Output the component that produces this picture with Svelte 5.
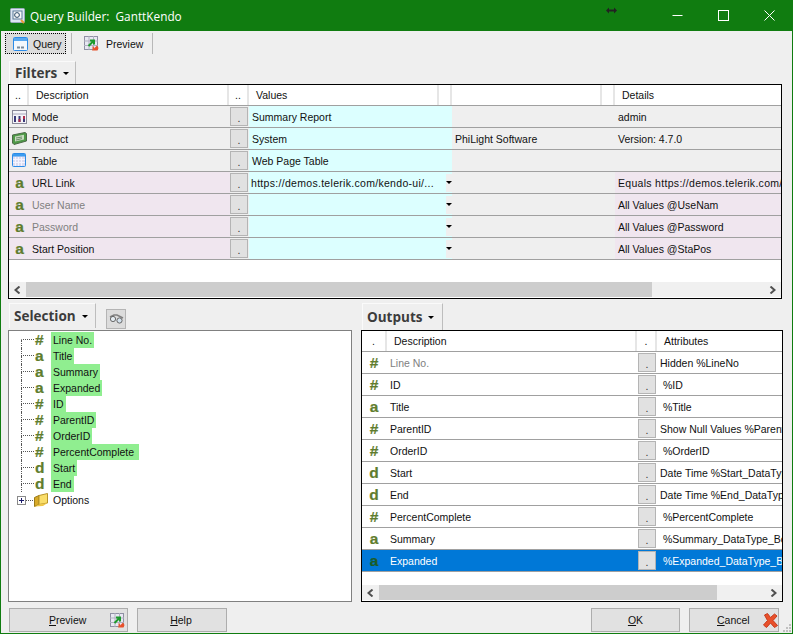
<script>
	const filters = [
		{ icon: "mode", name: "Mode", value: "Summary Report", extra: "", details: "admin" },
		{ icon: "product", name: "Product", value: "System", extra: "PhiLight Software", details: "Version: 4.7.0" },
		{ icon: "table", name: "Table", value: "Web Page Table", extra: "", details: "" },
		{ glyph: "a", name: "URL Link", value: "https://demos.telerik.com/kendo-ui/...", details: "Equals https://demos.telerik.com/kendo-ui/gantt", pink: true, drop: true, wide: true },
		{ glyph: "a", name: "User Name", value: "", details: "All Values @UseNam", pink: true, drop: true, dim: true },
		{ glyph: "a", name: "Password", value: "", details: "All Values @Password", pink: true, drop: true, dim: true },
		{ glyph: "a", name: "Start Position", value: "", details: "All Values @StaPos", pink: true, drop: true }
	];
	const selection = [
		["#", "Line No."], ["a", "Title"], ["a", "Summary"], ["a", "Expanded"], ["#", "ID"],
		["#", "ParentID"], ["#", "OrderID"], ["#", "PercentComplete "], ["d", "Start"], ["d", "End"]
	];
	const outputs = [
		{ glyph: "#", name: "Line No.", attr: "Hidden %LineNo", dim: true },
		{ glyph: "#", name: "ID", attr: " %ID" },
		{ glyph: "a", name: "Title", attr: " %Title" },
		{ glyph: "#", name: "ParentID", attr: "Show Null Values %ParentID" },
		{ glyph: "#", name: "OrderID", attr: " %OrderID" },
		{ glyph: "d", name: "Start", attr: "Date Time %Start_DataType_Date" },
		{ glyph: "d", name: "End", attr: "Date Time %End_DataType_Date" },
		{ glyph: "#", name: "PercentComplete", attr: " %PercentComplete" },
		{ glyph: "a", name: "Summary", attr: " %Summary_DataType_Boolean" },
		{ glyph: "a", name: "Expanded", attr: " %Expanded_DataType_Boolean", selected: true }
	];
</script>

{#snippet previewIcon()}
	<svg width="15" height="15" viewBox="0 0 15 15">
		<rect x="0.5" y="0.5" width="13" height="13" fill="#e8e8f2" stroke="#9090a4" />
		<path d="M0 5h14M0 9.5h14M5 0v14M9.5 0v14" stroke="#b0b0c0" />
		<path d="M4.5 10 L9 5.5 M6 4.5 h4 v4" stroke="#1c9a2c" stroke-width="2" fill="none" />
		<path d="M8 14.5 l5 -5 1.5 2.5 -1 2.5z" fill="#e8502a" />
		<path d="M8.5 10 l2 2 -2 2.5z" fill="#e8502a" />
	</svg>
{/snippet}

{#snippet rowIcon(name)}
	{#if name == "mode"}
		<svg width="15" height="14" viewBox="0 0 15 14">
			<rect x="0.5" y="0.5" width="14" height="13" fill="#f4f4f8" stroke="#8a8a9a" />
			<path d="M1 4h13" stroke="#a8a8bc" />
			<path d="M3 6v6M7.5 6v6M12 6v6" stroke="#3a3a78" stroke-width="2" />
			<path d="M12 6v3" stroke="#b02a4a" stroke-width="2" />
			<path d="M7.5 9v3" stroke="#b02a4a" stroke-width="2" />
		</svg>
	{:else if name == "product"}
		<svg width="15" height="13" viewBox="0 0 15 13">
			<path d="M0.5 3 L13 0.5 14.5 1.5 14.5 9 2 12.5 0.5 11z" fill="#4f9a48" stroke="#4c6a48" />
			<path d="M3 4.5 L12 2.8 12 7.5 3 9.5z" fill="#c8dcc0" />
			<path d="M4 6 L10 5M4 8 L10 6.6" stroke="#6a8a6a" />
		</svg>
	{:else}
		<svg width="15" height="15" viewBox="0 0 15 15">
			<rect x="0.5" y="0.5" width="13" height="13" rx="1" fill="#dcdcf0" stroke="#2c8ce8" />
			<rect x="1" y="1" width="12" height="2.5" fill="#3a9cf0" />
			<path d="M3.5 4v9M6.5 4v9M9.5 4v9M1 6.5h12M1 9.5h12" stroke="#f4f4ff" />
		</svg>
	{/if}
{/snippet}

<div class="window">
	<header class="titlebar">
		<svg class="app-icon" width="16" height="16" viewBox="0 0 16 16">
			<rect x="0.5" y="0.5" width="14" height="14" rx="1" fill="#dce6f2" stroke="#9aaabc" />
			<rect x="3" y="3" width="9" height="8" fill="#f8f8f8" stroke="#5a7a98" />
			<circle cx="7" cy="7" r="2.4" fill="none" stroke="#2a4a68" />
			<path d="M11 12l3 3" stroke="#e89a3a" stroke-width="2" />
		</svg>
		<span class="title">Query Builder:&nbsp; GanttKendo</span>
		<svg class="resize-cursor" width="11" height="7" viewBox="0 0 11 7">
			<path d="M0 3.5 L3 0.5V2.5H8V0.5L11 3.5 8 6.5V4.5H3V6.5z" fill="#222" />
		</svg>
		<div class="win-controls">
			<svg width="11" height="11" viewBox="0 0 11 11"><path d="M0.5 5.5h10" stroke="#fff" /></svg>
			<svg width="11" height="11" viewBox="0 0 11 11"><rect x="0.5" y="0.5" width="10" height="10" fill="none" stroke="#fff" /></svg>
			<svg width="11" height="11" viewBox="0 0 11 11"><path d="M0.5 0.5l10 10M10.5 0.5l-10 10" stroke="#fff" /></svg>
		</div>
	</header>

	<div class="content">
		<div class="toolbar">
			<button class="tool active" type="button">
				<svg width="15" height="14" viewBox="0 0 15 14">
					<rect x="0.5" y="0.5" width="14" height="13" rx="1" fill="#f4f8fc" stroke="#2c8ce8" />
					<rect x="1" y="1" width="13" height="3" fill="#58a8f0" />
					<path d="M4 10.5h3M8 10.5h3" stroke="#7a8a9a" stroke-width="2" />
				</svg>
				<span>Query</span>
			</button>
			<span class="tool-sep"></span>
			<button class="tool" type="button">
				{@render previewIcon()}
				<span>Preview</span>
			</button>
			<span class="tool-sep last"></span>
		</div>

		<div class="tab filters-tab"><span class="tab-label">Filters</span><i class="caret"></i></div>

		<section class="panel filters">
			<div class="grid-head">
				<span class="hc c">..</span>
				<span class="hc">Description</span>
				<span class="hc c">..</span>
				<span class="hc">Values</span>
				<span class="hc"></span>
				<span class="hc"></span>
				<span class="hc"></span>
				<span class="hc">Details</span>
			</div>
			{#each filters as row}
				<div class="frow" class:pink={row.pink} class:dim={row.dim} class:wide={row.wide}>
					<span class="icon-cell">
						{#if row.glyph}<span class="glyph">{row.glyph}</span>{:else}{@render rowIcon(row.icon)}{/if}
					</span>
					<span class="cell name">{row.name}</span>
					<span class="btn-cell"><span class="dot-btn">.</span></span>
					<span class="cell value">
						<span class="value-text" class:url={row.drop}>{row.value}</span>
						{#if row.drop}<span class="drop"><i class="caret"></i></span>{/if}
					</span>
					<span class="cell extra">{row.extra ?? ""}</span>
					<span class="cell details">{row.details}</span>
				</div>
			{/each}
			<div class="spacer"></div>
			<div class="hscroll">
				<span class="arrow">
					<svg width="7" height="8" viewBox="0 0 7 8"><path d="M5.5 0.5 L1.5 4 5.5 7.5" fill="none" stroke="#505050" stroke-width="2" /></svg>
				</span>
				<span class="thumb thumb-filters"></span>
				<span class="track"></span>
				<span class="arrow">
					<svg width="7" height="8" viewBox="0 0 7 8"><path d="M1.5 0.5 L5.5 4 1.5 7.5" fill="none" stroke="#505050" stroke-width="2" /></svg>
				</span>
			</div>
		</section>

		<div class="split">
			<div class="left">
				<div class="left-head">
					<div class="tab selection-tab"><span class="tab-label">Selection</span><i class="caret"></i></div>
					<span class="binoculars">
						<svg width="15" height="10" viewBox="0 0 15 10">
							<path d="M1 3 L5 1 H8 L14 4" fill="none" stroke="#808080" stroke-width="1.6" />
							<circle cx="4" cy="5" r="2.6" fill="#e4ecf2" stroke="#666" />
							<circle cx="10.5" cy="6.5" r="2.6" fill="#d4e2ee" stroke="#666" />
						</svg>
					</span>
				</div>
				<section class="tree">
					{#each selection as item, i}
						<div class="tree-row">
							<span class="elbow">
								<span class="elbow-top" class:first={i == 0}></span>
								<span class="elbow-bottom"></span>
							</span>
							<span class="glyph tree-glyph">{item[0]}</span>
							<span class="tree-label">{item[1]}</span>
						</div>
					{/each}
					<div class="tree-row options">
						<span class="plus">
							<svg width="9" height="9" viewBox="0 0 9 9">
								<rect x="0.5" y="0.5" width="8" height="8" fill="#fff" stroke="#8a8a8a" />
								<path d="M2 4.5h5M4.5 2v5" stroke="#1a1a6a" />
							</svg>
						</span>
						<span class="opt-dash"></span>
						<svg class="folder" width="14" height="14" viewBox="0 0 14 14">
							<path d="M0.5 4.5 L5 2.5 V11.5 L0.5 13.5z" fill="#d8aa28" stroke="#9a7a18" />
							<path d="M5 2.5 L13.5 0.5 V10 L5 11.5z" fill="#fade6a" stroke="#b89428" />
							<path d="M0.5 13.5 L5 11.5 13.5 10 9 13z" fill="#f0c848" />
						</svg>
						<span class="tree-label plain">Options</span>
					</div>
				</section>
			</div>

			<div class="right">
				<div class="tab outputs-tab"><span class="tab-label">Outputs</span><i class="caret"></i></div>
				<section class="panel outputs">
					<div class="grid-head out-head">
						<span class="hc c">.</span>
						<span class="hc">Description</span>
						<span class="hc c">.</span>
						<span class="hc">Attributes</span>
					</div>
					{#each outputs as row}
						<div class="orow" class:dim={row.dim} class:selected={row.selected}>
							<span class="icon-cell out-icon"><span class="glyph">{row.glyph}</span></span>
							<span class="cell name">{row.name}</span>
							<span class="btn-cell"><span class="dot-btn">.</span></span>
							<span class="cell attr">{row.attr}</span>
						</div>
					{/each}
					<div class="spacer"></div>
					<div class="hscroll">
						<span class="arrow">
							<svg width="7" height="8" viewBox="0 0 7 8"><path d="M5.5 0.5 L1.5 4 5.5 7.5" fill="none" stroke="#505050" stroke-width="2" /></svg>
						</span>
						<span class="thumb thumb-outputs"></span>
						<span class="track"></span>
						<span class="arrow">
							<svg width="7" height="8" viewBox="0 0 7 8"><path d="M1.5 0.5 L5.5 4 1.5 7.5" fill="none" stroke="#505050" stroke-width="2" /></svg>
						</span>
					</div>
				</section>
			</div>
		</div>

		<footer class="footer">
			<button class="btn preview" type="button">
				<span><u>P</u>review</span>
				<span class="btn-icon">{@render previewIcon()}</span>
			</button>
			<button class="btn help" type="button"><u>H</u>elp</button>
			<span class="grow"></span>
			<button class="btn ok" type="button"><u>O</u>K</button>
			<button class="btn cancel" type="button">
				<span><u>C</u>ancel</span>
				<svg class="btn-icon" width="15" height="15" viewBox="0 0 15 15">
					<path d="M1.5 2 L4.5 0.5 7.5 4.5 11.5 1 14 3 10 7.5 14.5 12.5 11.5 14.5 7.5 10 3.5 14.5 0.5 12 4.5 7.5z" fill="#e8502a" stroke="#c83a1c" />
				</svg>
			</button>
		</footer>
		<svg class="grip" width="10" height="10" viewBox="0 0 10 10">
			<path d="M7 1h2v2h-2zM4 4h2v2h-2zM7 4h2v2h-2zM1 7h2v2h-2zM4 7h2v2h-2zM7 7h2v2h-2z" fill="#c0c0c0" />
		</svg>
	</div>
</div>

<style>
	:global(body) {
		margin: 0;
		background: #efefef;
	}
	* {
		box-sizing: border-box;
	}
	.window {
		position: relative;
		width: 793px;
		height: 634px;
		display: flex;
		flex-direction: column;
		font-family: "Liberation Sans", Arial, sans-serif;
		font-size: 10.5px;
		color: #111;
		background: #efefef;
		overflow: hidden;
	}
	.titlebar {
		height: 31px;
		flex: none;
		background: #107c10;
		display: flex;
		align-items: center;
		padding-left: 10px;
		color: #fff;
	}
	.app-icon {
		margin-right: 4px;
		margin-top: 1px;
	}
	.title {
		font-family: "Open Sans", sans-serif;
		font-size: 11.8px;
	}
	.resize-cursor {
		position: absolute;
		left: 606px;
		top: 7px;
	}
	.win-controls {
		margin-left: auto;
		display: flex;
		gap: 35px;
		padding-right: 18px;
		align-items: center;
	}
	.content {
		position: relative;
		flex: 1;
		min-height: 0;
		display: flex;
		flex-direction: column;
		border: 1px solid #107c10;
		border-top: none;
		padding: 2px 9px 0 7px;
	}

	/* toolbar */
	.toolbar {
		display: flex;
		align-items: center;
		height: 21px;
		margin-left: -3px;
	}
	.tool {
		display: flex;
		align-items: center;
		height: 21px;
		border: 1px solid transparent;
		background: transparent;
		font: inherit;
		color: #111;
		padding: 0 0 0 7px;
		margin: 0;
	}
	.tool.active {
		width: 61px;
		background: #dcdcdc;
		border: 1px dotted #000;
		gap: 5px;
	}
	.tool:not(.active) {
		margin-left: 4px;
		gap: 7px;
		width: 71px;
	}
	.tool-sep {
		width: 1px;
		height: 21px;
		background: #b8b8b8;
		margin-left: 5px;
	}
	.tab {
		display: flex;
		align-items: center;
		height: 23px;
		border-top: 1px solid #fafafa;
		border-left: 1px solid #fafafa;
		border-right: 1px solid #bdbdbd;
		padding-left: 5px;
	}
	.tab-label {
		font-family: "Open Sans", sans-serif;
		font-weight: 700;
		font-size: 13.5px;
		color: #3c3c3c;
	}
	.caret {
		display: block;
		width: 0;
		height: 0;
		border: 3px solid transparent;
		border-top-color: #000;
		border-bottom: none;
	}
	.tab .caret {
		margin-left: 6px;
	}
	.filters-tab {
		width: 67px;
		margin-top: 7px;
		margin-left: 1px;
	}

	/* grids */
	.panel {
		background: #fff;
		border: 1px solid #000;
		display: flex;
		flex-direction: column;
		overflow: hidden;
	}
	.filters {
		width: 774px;
		height: 215px;
		flex: none;
	}
	.grid-head {
		display: grid;
		height: 21px;
		flex: none;
		grid-template-columns: 20px 200px 20px 190px 13px 150px 13px 1fr;
		border-bottom: 1px solid #a0a0a0;
	}
	.out-head {
		grid-template-columns: 25px 250px 20px 1fr;
	}
	.hc {
		display: flex;
		align-items: center;
		padding-left: 7px;
		border-right: 2px solid #e6e6e6;
		white-space: nowrap;
	}
	.hc.c {
		justify-content: center;
		padding-left: 0;
	}
	.hc:last-child {
		border-right: none;
	}
	.frow,
	.orow {
		display: grid;
		height: 22px;
		flex: none;
		align-items: stretch;
		border-bottom: 1px solid #a0a0a0;
	}
	.frow {
		grid-template-columns: 20px 200px 20px 203px 163px 1fr;
		background: #efefef;
	}
	.orow {
		grid-template-columns: 25px 250px 20px 1fr;
		background: #fff;
	}
	.frow.pink .icon-cell,
	.frow.pink .name,
	.frow.pink .details {
		background: #f0e6ef;
	}
	.frow.pink .btn-cell {
		background: linear-gradient(90deg, #f0e6ef 1px, #efefef 1px);
	}
	.wide .value-text,
	.wide .details {
		letter-spacing: 0.3px;
	}
	.icon-cell {
		display: flex;
		align-items: center;
		justify-content: center;
		padding-left: 1px;
	}
	.out-icon {
		padding-right: 2px;
	}
	.glyph {
		font-weight: 700;
		font-size: 15.5px;
		line-height: 16px;
		color: #5f7d2e;
		-webkit-text-stroke: 0.2px #5f7d2e;
	}
	.cell {
		display: flex;
		align-items: center;
		padding-left: 3px;
		white-space: pre;
		overflow: hidden;
	}
	.dim .name {
		color: #808080;
	}
	.selected {
		background: #0078d7;
		color: #fff;
	}
	.selected .glyph {
		color: #1d5c28;
		-webkit-text-stroke-color: #1d5c28;
	}
	.btn-cell {
		display: flex;
		padding: 1px 0 1px 1px;
	}
	.dot-btn {
		width: 18px;
		height: 19px;
		background: #e1e1e1;
		border: 1px solid #b4b4b4;
		display: flex;
		justify-content: center;
		align-items: flex-end;
		line-height: 12px;
		color: #333;
		padding-bottom: 1px;
	}
	.value {
		background: #dcffff;
		justify-content: space-between;
		padding-right: 0;
	}
	.value-text.url {
		margin-left: -1px;
	}
	.drop {
		width: 6px;
		height: 18px;
		background: #efefef;
		display: flex;
		align-items: center;
		justify-content: center;
		flex: none;
	}
	.drop .caret {
		border-width: 3px;
		flex: none;
	}
	.details {
		padding-left: 3px;
	}
	.spacer {
		flex: 1;
	}
	.hscroll {
		display: flex;
		height: 15px;
		flex: none;
		margin-bottom: 1px;
		background: #f0f0f0;
	}
	.arrow {
		width: 17px;
		display: flex;
		align-items: center;
		justify-content: center;
		flex: none;
	}
	.thumb {
		background: #cdcdcd;
		flex: none;
	}
	.thumb-filters {
		width: 626px;
	}
	.thumb-outputs {
		width: 338px;
	}
	.track {
		flex: 1;
	}

	/* lower half */
	.split {
		display: flex;
		margin-top: 4px;
		height: 299px;
		flex: none;
	}
	.left {
		width: 344px;
		flex: none;
		display: flex;
		flex-direction: column;
	}
	.left-head {
		display: flex;
		align-items: center;
		height: 27px;
		flex: none;
	}
	.selection-tab {
		width: 87px;
		height: 25px;
		margin-left: 1px;
		align-self: flex-start;
		padding-left: 4px;
	}
	.binoculars {
		width: 20px;
		height: 20px;
		margin-left: 10px;
		margin-top: 4px;
		background: #dcdcdc;
		border: 1px solid #b4b4b4;
		display: flex;
		align-items: center;
		justify-content: center;
	}
	.tree {
		flex: 1;
		background: #fff;
		border: 1px solid #808080;
		padding: 1px 0 0 12px;
	}
	.tree-row {
		display: flex;
		height: 16px;
		align-items: center;
	}
	.elbow {
		width: 13px;
		height: 16px;
		display: flex;
		flex-direction: column;
	}
	.elbow-top {
		height: 8px;
		flex: none;
		border-left: 1px dotted #555;
		border-bottom: 1px dotted #555;
	}
	.elbow-top.first {
		border-left-color: transparent;
	}
	.elbow-bottom {
		height: 8px;
		flex: none;
		border-left: 1px dotted #555;
	}
	.tree-glyph {
		width: 17px;
		padding-left: 1px;
	}
	.tree-label {
		height: 16px;
		line-height: 16px;
		padding: 0 2px;
		background: #90ee90;
		white-space: pre;
	}
	.tree-label.plain {
		background: none;
		margin-left: 3px;
	}
	.plus {
		margin-left: -4px;
		display: flex;
	}
	.opt-dash {
		width: 7px;
		border-top: 1px dotted #555;
	}
	.folder {
		margin-left: 1px;
	}
	.right {
		width: 422px;
		margin-left: 9px;
		flex: none;
		display: flex;
		flex-direction: column;
	}
	.outputs-tab {
		width: 81px;
		height: 27px;
		margin-left: 1px;
		flex: none;
		padding-left: 4px;
	}
	.outputs {
		flex: 1;
	}

	/* footer */
	.footer {
		display: flex;
		margin-top: 6px;
		height: 24px;
		margin-right: 4px;
		gap: 9px;
		margin-left: 1px;
	}
	.grow {
		flex: 1;
	}
	.btn {
		height: 24px;
		border: 1px solid #adadad;
		background: #e1e1e1;
		font: inherit;
		color: #111;
		padding: 0;
		display: flex;
		align-items: center;
		justify-content: center;
		margin: 0;
	}
	.btn.preview {
		width: 119px;
		justify-content: flex-start;
		padding-right: 2px;
	}
	.btn.preview span:first-child {
		margin-left: 39px;
	}
	.btn-icon {
		display: flex;
		flex: none;
	}
	.btn.preview .btn-icon {
		margin-left: auto;
	}
	.help,
	.cancel {
		width: 90px;
	}
	.btn.help {
		padding-right: 2px;
	}
	.ok {
		width: 89px;
	}
	.btn.cancel {
		justify-content: flex-start;
		padding-left: 27px;
	}
	.btn.cancel svg {
		margin-left: 13px;
	}
	.grip {
		position: absolute;
		right: 0;
		bottom: 0;
	}
</style>
